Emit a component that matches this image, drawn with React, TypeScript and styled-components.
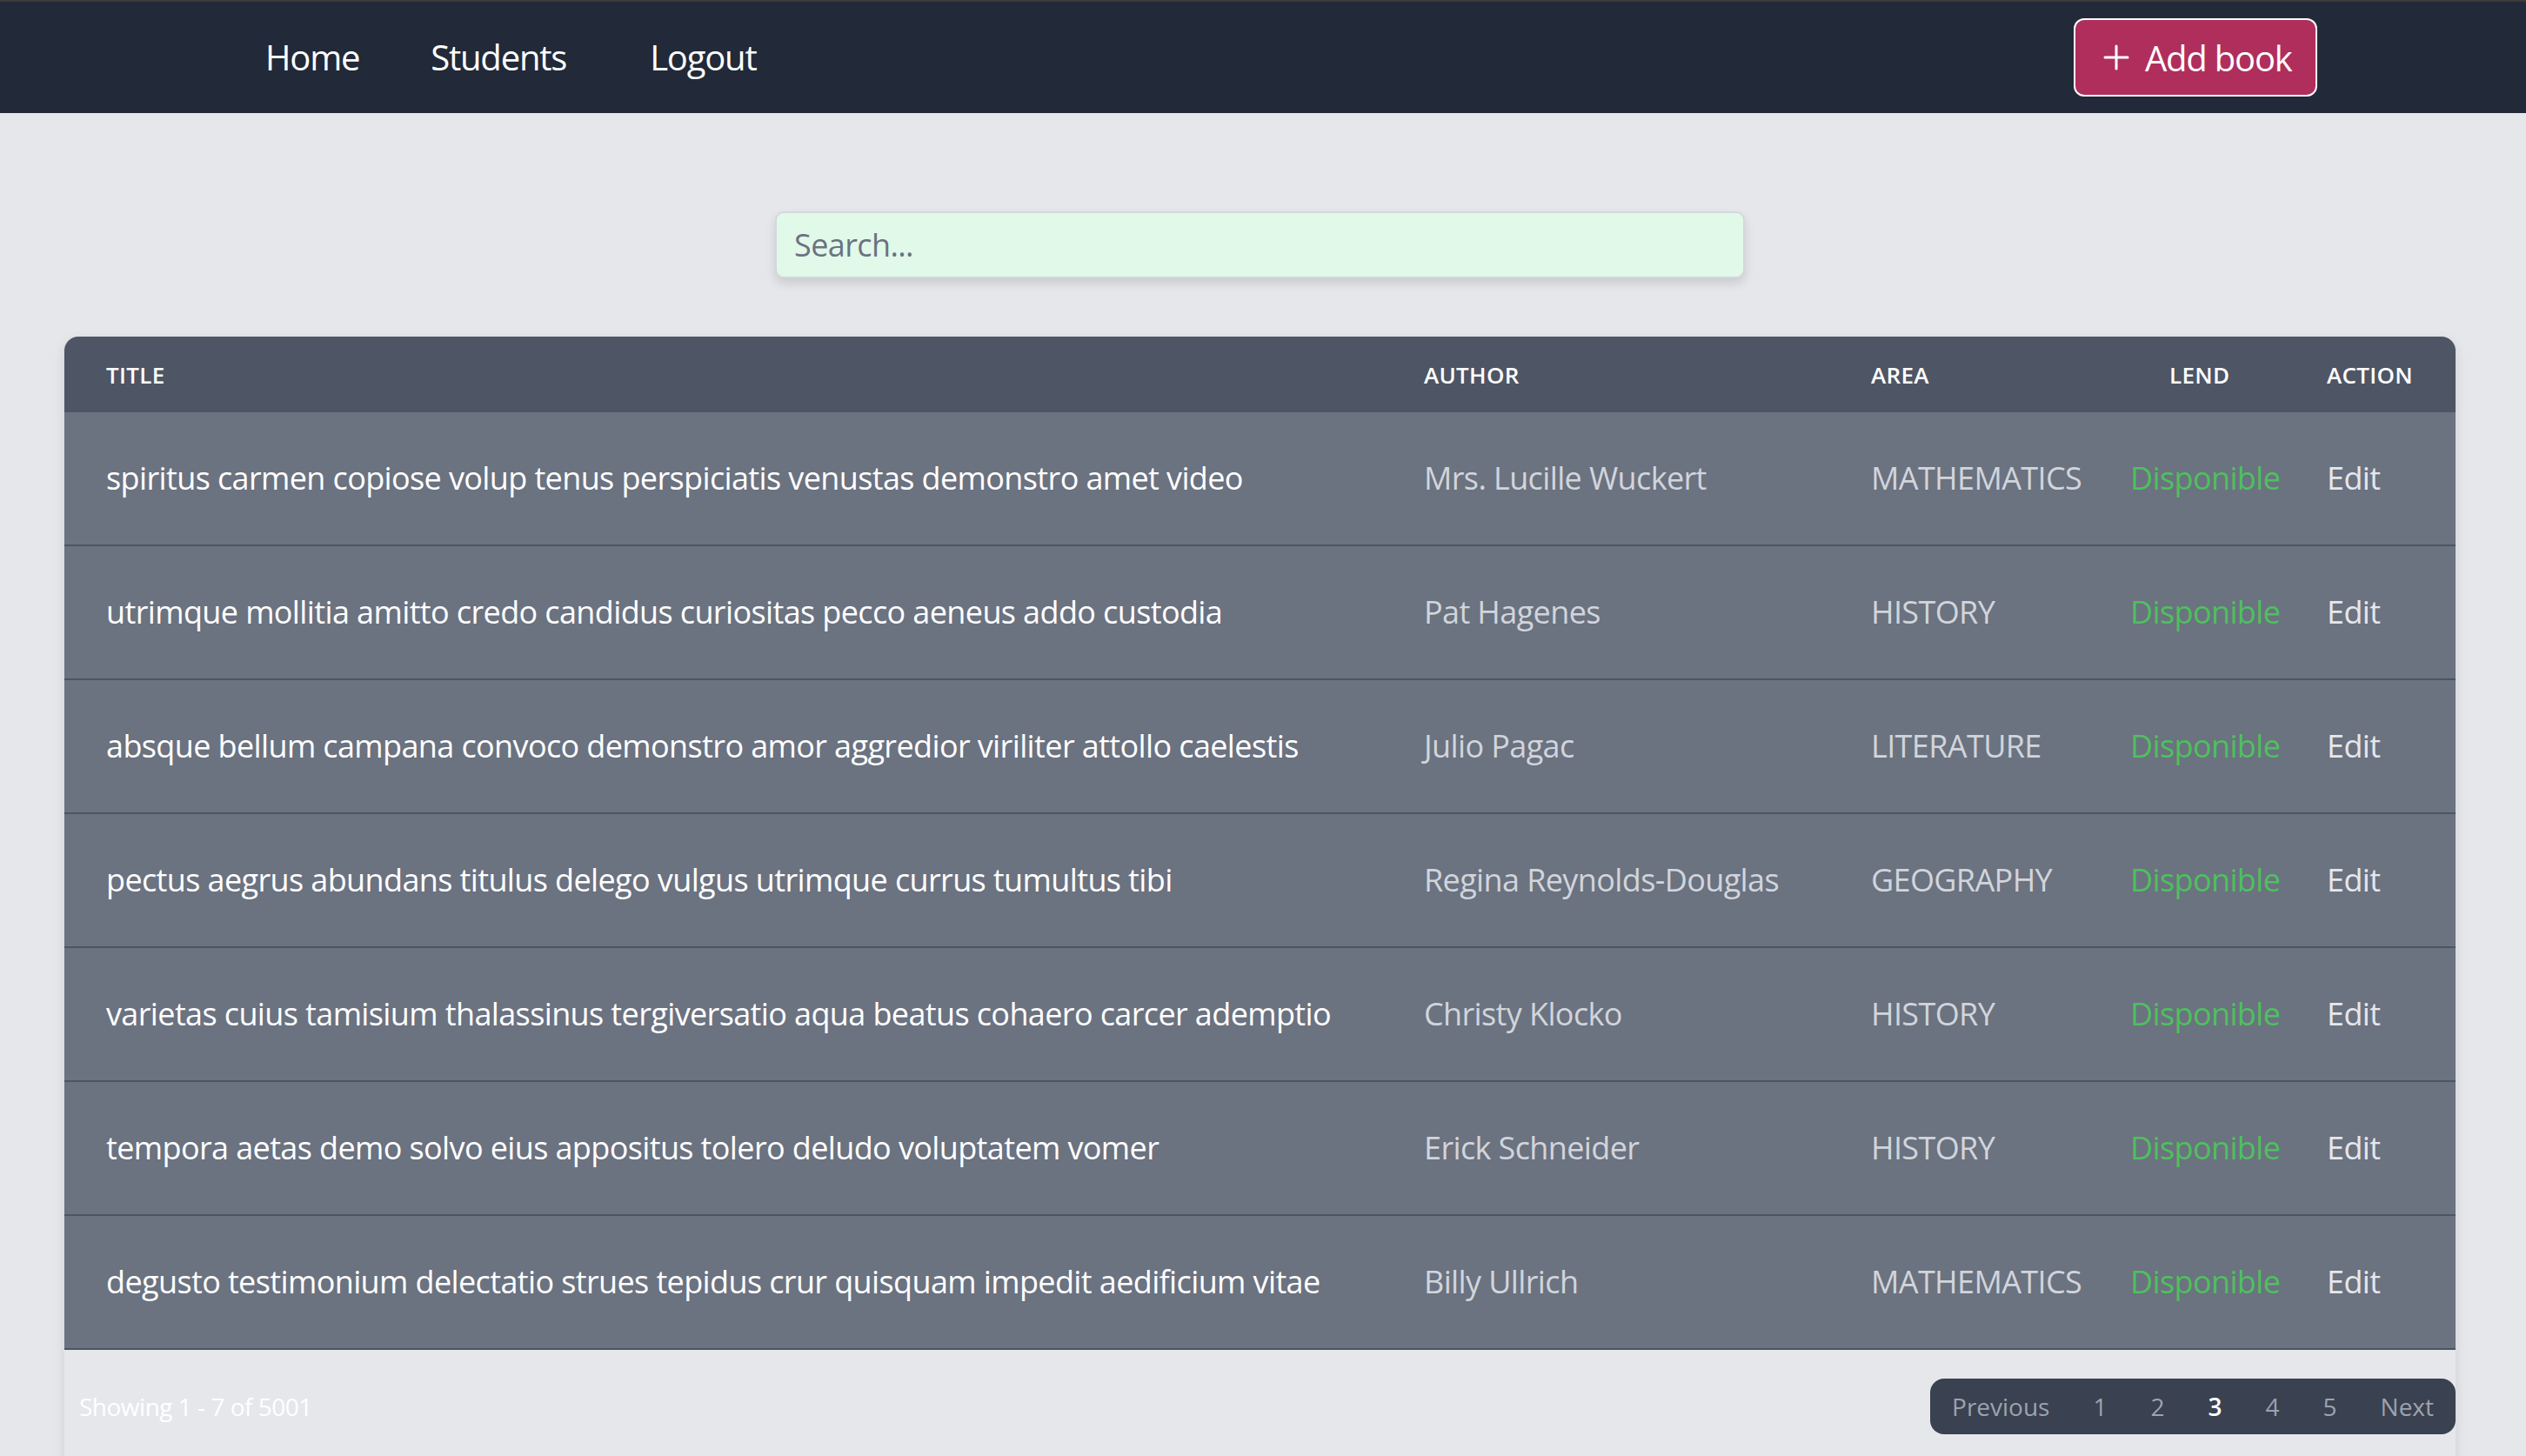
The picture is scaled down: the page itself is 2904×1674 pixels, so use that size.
import React from "react";
import styled, { createGlobalStyle } from "styled-components";

const GlobalStyle = createGlobalStyle`
  html, body { margin: 0; padding: 0; background: #e5e7eb; }
  body { font-family: "Open Sans", "Noto Sans", sans-serif; overflow: hidden; }
  *, *::before, *::after { box-sizing: border-box; }
`;

const Page = styled.div`
  min-height: 1674px;
  background: #e5e7eb;
`;

const NavBar = styled.header`
  height: 130px;
  border-top: 2px solid #3d3a38;
  background: #222938;
  display: flex;
  align-items: center;
  justify-content: space-between;
  padding: 0 240px 0 305px;
`;

const NavLinks = styled.nav`
  display: flex;
  align-items: center;
  gap: 82px;
`;

const NavLink = styled.a<{ $extra?: number }>`
  color: #ffffff;
  font-size: 40px;
  font-weight: 500;
  line-height: 56px;
  letter-spacing: -1.2px;
  text-decoration: none;
  margin-left: ${(p) => p.$extra ?? 0}px;
`;

const AddButton = styled.button`
  height: 90px;
  width: 280px;
  display: flex;
  align-items: center;
  gap: 18px;
  padding: 0 0 0 32px;
  background: #b02e5c;
  border: 2px solid #ffffff;
  border-radius: 12px;
  color: #ffffff;
  font-family: inherit;
  font-size: 40px;
  font-weight: 500;
  letter-spacing: -1.2px;
`;

const Main = styled.main`
  padding: 113px 81px 0 74px;
`;

const SearchInput = styled.input`
  display: block;
  width: 1115px;
  height: 77px;
  margin: 0 auto;
  padding: 0 20px;
  background: #e1f9e9;
  border: 2px solid #d4d7dc;
  border-radius: 10px;
  box-shadow: 0 6px 12px rgba(0, 0, 0, 0.12);
  font-family: inherit;
  font-size: 36px;
  letter-spacing: -0.6px;
  color: #374151;
  outline: none;
  &::placeholder { color: #6b7280; }
`;

const Card = styled.section`
  margin-top: 67px;
  border-radius: 16px 16px 0 0;
  box-shadow: 0 4px 14px rgba(0, 0, 0, 0.1);
  min-height: 1300px;
`;

const Table = styled.table`
  width: 100%;
  border-collapse: collapse;
  table-layout: fixed;
  border-radius: 16px 16px 0 0;
  overflow: hidden;
`;

const HeadCell = styled.th<{ $indent?: number }>`
  height: 87px;
  padding: 0 0 0 ${(p) => p.$indent ?? 48}px;
  background: #4e5564;
  color: #ffffff;
  text-align: left;
  font-size: 26px;
  font-weight: 600;
  letter-spacing: 0.3px;
  text-transform: uppercase;
`;

const Row = styled.tr`
  background: #6b7280;
  border-bottom: 2px solid #4b5563;
`;

const Cell = styled.td<{ $color: string }>`
  padding: 48px 0 48px 48px;
  font-size: 36px;
  line-height: 56px;
  letter-spacing: -0.62px;
  color: ${(p) => p.$color};
  white-space: nowrap;
`;

const Footer = styled.div`
  display: flex;
  align-items: center;
  justify-content: space-between;
  padding: 33px 0 0 17px;
`;

const Showing = styled.span`
  color: #ffffff;
  font-size: 28px;
  letter-spacing: -0.5px;
`;

const Pager = styled.div`
  display: flex;
  height: 64px;
  align-items: center;
  background: #3a4150;
  border-radius: 16px;
`;

const PageItem = styled.span<{ $active?: boolean }>`
  padding: 0 25px;
  font-size: 28px;
  color: ${(p) => (p.$active ? "#ffffff" : "#9ca3af")};
  font-weight: ${(p) => (p.$active ? 600 : 400)};
`;

const books = [
  ["spiritus carmen copiose volup tenus perspiciatis venustas demonstro amet video", "Mrs. Lucille Wuckert", "MATHEMATICS"],
  ["utrimque mollitia amitto credo candidus curiositas pecco aeneus addo custodia", "Pat Hagenes", "HISTORY"],
  ["absque bellum campana convoco demonstro amor aggredior viriliter attollo caelestis", "Julio Pagac", "LITERATURE"],
  ["pectus aegrus abundans titulus delego vulgus utrimque currus tumultus tibi", "Regina Reynolds-Douglas", "GEOGRAPHY"],
  ["varietas cuius tamisium thalassinus tergiversatio aqua beatus cohaero carcer ademptio", "Christy Klocko", "HISTORY"],
  ["tempora aetas demo solvo eius appositus tolero deludo voluptatem vomer", "Erick Schneider", "HISTORY"],
  ["degusto testimonium delectatio strues tepidus crur quisquam impedit aedificium vitae", "Billy Ullrich", "MATHEMATICS"],
];

const PlusIcon = () => (
  <svg width="30" height="30" viewBox="0 0 30 30" fill="none" stroke="#ffffff" strokeWidth="3" strokeLinecap="round">
    <line x1="15" y1="2" x2="15" y2="28" />
    <line x1="2" y1="15" x2="28" y2="15" />
  </svg>
);

export default function App() {
  return (
    <Page>
      <GlobalStyle />
      <NavBar>
        <NavLinks>
          <NavLink href="#">Home</NavLink>
          <NavLink href="#">Students</NavLink>
          <NavLink href="#" $extra={14}>Logout</NavLink>
        </NavLinks>
        <AddButton>
          <PlusIcon />
          Add book
        </AddButton>
      </NavBar>
      <Main>
        <SearchInput placeholder="Search..." />
        <Card>
          <Table>
            <colgroup>
              <col style={{ width: 1515 }} />
              <col style={{ width: 514 }} />
              <col style={{ width: 298 }} />
              <col style={{ width: 226 }} />
              <col style={{ width: 196 }} />
            </colgroup>
            <thead>
              <tr>
                <HeadCell>Title</HeadCell>
                <HeadCell>Author</HeadCell>
                <HeadCell>Area</HeadCell>
                <HeadCell $indent={93}>Lend</HeadCell>
                <HeadCell>Action</HeadCell>
              </tr>
            </thead>
            <tbody>
              {books.map(([title, author, area]) => (
                <Row key={title}>
                  <Cell $color="#ffffff">{title}</Cell>
                  <Cell $color="#d1d5db">{author}</Cell>
                  <Cell $color="#d1d5db">{area}</Cell>
                  <Cell $color="#4ec05e">Disponible</Cell>
                  <Cell $color="#e5e7eb">Edit</Cell>
                </Row>
              ))}
            </tbody>
          </Table>
          <Footer>
            <Showing>Showing 1 - 7 of 5001</Showing>
            <Pager>
              <PageItem>Previous</PageItem>
              <PageItem>1</PageItem>
              <PageItem>2</PageItem>
              <PageItem $active>3</PageItem>
              <PageItem>4</PageItem>
              <PageItem>5</PageItem>
              <PageItem>Next</PageItem>
            </Pager>
          </Footer>
        </Card>
      </Main>
    </Page>
  );
}
